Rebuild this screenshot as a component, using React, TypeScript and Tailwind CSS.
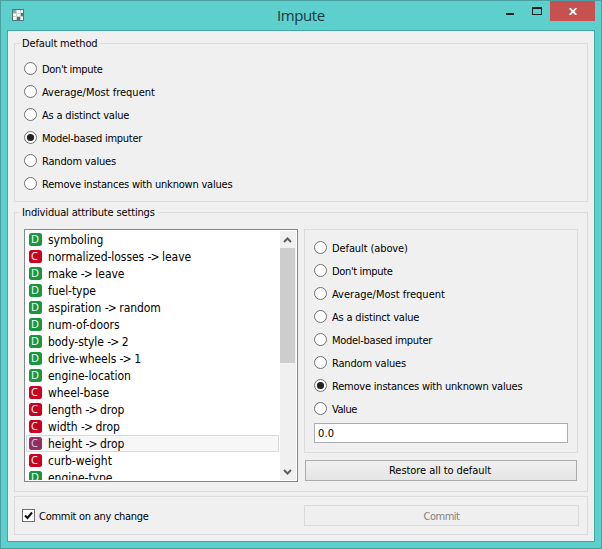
import React from "react";

const methods = [
  "Don't impute",
  "Average/Most frequent",
  "As a distinct value",
  "Model-based imputer",
  "Random values",
  "Remove instances with unknown values",
];

const tracking: Record<string, string> = {
  "Don't impute": "tracking-[-0.35px]",
  "Average/Most frequent": "tracking-[0px]",
  "As a distinct value": "tracking-[-0.19px]",
  "Model-based imputer": "tracking-[-0.28px]",
  "Random values": "tracking-[-0.18px]",
  "Remove instances with unknown values": "tracking-[-0.21px]",
  "Default (above)": "tracking-[-0.1px]",
  Value: "tracking-[-0.45px]",
};

const attributes: [string, string, string?][] = [
  ["D", "symboling"],
  ["C", "normalized-losses", "leave"],
  ["D", "make", "leave"],
  ["D", "fuel-type"],
  ["D", "aspiration", "random"],
  ["D", "num-of-doors"],
  ["D", "body-style", "2"],
  ["D", "drive-wheels", "1"],
  ["D", "engine-location"],
  ["C", "wheel-base"],
  ["C", "length", "drop"],
  ["C", "width", "drop"],
  ["C", "height", "drop"],
  ["C", "curb-weight"],
  ["D", "engine-type"],
];

function Radio({ label, checked }: { label: string; checked?: boolean }) {
  return (
    <div className="flex h-[23px] items-center gap-[5px]">
      <svg width="13" height="13" className="shrink-0">
        <circle cx="6.5" cy="6.5" r="6" fill="#fff" stroke="#707070" />
        {checked && <circle cx="6.5" cy="6.5" r="3.6" fill="#222" />}
      </svg>
      <span className={"relative top-px whitespace-nowrap " + tracking[label]}>{label}</span>
    </div>
  );
}

function AttributeRow({
  kind,
  name,
  action,
  selected,
}: {
  kind: string;
  name: string;
  action?: string;
  selected: boolean;
}) {
  const color = selected ? "bg-[#962d62]" : kind === "D" ? "bg-[#1b9640]" : "bg-[#ca0020]";
  return (
    <div
      className={
        "flex h-[17px] shrink-0 items-center gap-[6px] border pl-[2px] " +
        (selected ? "border-[#dadada] bg-[#f7f7f7]" : "border-transparent")
      }
    >
      <span
        className={
          "flex h-[13px] w-[13px] shrink-0 items-center rounded-[2.5px] pl-[2px] font-['Open_Sans',sans-serif] text-[11px] leading-[11px] tracking-normal [font-stretch:normal] " +
          (selected ? "text-[#c9d3ee] " : "text-white ") +
          color
        }
      >
        <span className="pb-[2px]">{kind}</span>
      </span>
      <span className="whitespace-nowrap pt-[2px]">
        {name}
        {action && (
          <>
            {" "}
            <span className="tracking-[-0.9px]">-&gt;</span> {action}
          </>
        )}
      </span>
    </div>
  );
}

function Legend({ text }: { text: string }) {
  return (
    <legend className="ml-[5px] h-[14px] whitespace-nowrap pl-[2px] pr-[3px] leading-[16px]">{text}</legend>
  );
}

export default function App() {
  return (
    <div className="flex h-[549px] w-[602px] flex-col overflow-hidden border border-[#4a9fa0] bg-[#5dd0ce] font-['DejaVu_Sans_Condensed','DejaVu_Sans',sans-serif] text-[11px] leading-[14px] tracking-[-0.15px] text-black [font-stretch:condensed]">
      <header className="flex h-[29px] shrink-0 items-start pl-[11px] pr-[6px]">
        <svg width="12" height="12" className="mt-[8px]" shapeRendering="crispEdges">
          <rect width="12" height="12" fill="#4f7776" />
          <rect x="1" y="1" width="10" height="10" fill="#c3d2ce" />
          <rect x="1" y="1" width="3" height="3" fill="#8fa9a4" />
          <rect x="5" y="1" width="3" height="3" fill="#fff" />
          <rect x="9" y="1" width="2" height="3" fill="#fff" />
          <rect x="1" y="5" width="3" height="2" fill="#fff" />
          <rect x="5" y="5" width="3" height="2" fill="#fff" />
          <rect x="9" y="4" width="2" height="3" fill="#58716d" />
          <rect x="1" y="8" width="3" height="3" fill="#fff" />
          <rect x="5" y="8" width="3" height="3" fill="#58716d" />
          <rect x="9" y="8" width="2" height="3" fill="#fff" />
        </svg>
        <h1 className="ml-[253px] mt-[4px] w-[60px] font-['Open_Sans',sans-serif] text-[15px] leading-[20px] tracking-[-0.4px] text-[#20393b] [font-stretch:normal]">
          Impute
        </h1>
        <svg width="36" height="20" className="ml-auto" shapeRendering="crispEdges">
          <path d="M0 12h8v2h-8z" fill="#222" />
          <path fillRule="evenodd" d="M26 6h10v8h-10zM27 8v5h8v-5z" fill="#222" />
        </svg>
        <div className="ml-[8px] flex h-[20px] w-[45px] items-center justify-center bg-[#c75050]">
          <svg width="8" height="7" viewBox="0 0 8 7" className="mt-px">
            <path d="M0.7 0.2L7.3 6.8M7.3 0.2L0.7 6.8" stroke="#fff" strokeWidth="1.9" />
          </svg>
        </div>
      </header>

      <main className="mx-[6px] mb-[6px] flex h-[512px] shrink-0 flex-col border border-[#46a5a5] bg-[#f0f0f0] px-[6px] pt-[5px]">
        <fieldset className="h-[166px] border border-[#dcdcdc]">
          <Legend text="Default method" />
          <div className="pl-[9px] pt-[7px]">
            {methods.map((m) => (
              <Radio key={m} label={m} checked={m === "Model-based imputer"} />
            ))}
          </div>
        </fieldset>

        <fieldset className="mt-[3px] h-[287px] border border-[#dcdcdc]">
          <Legend text="Individual attribute settings" />
          <div className="flex gap-[6px] pl-[9px] pt-[10px]">
            <div className="flex h-[253px] w-[274px] border border-[#828790] bg-white p-px">
              <div className="flex w-[253px] flex-col overflow-hidden text-[12px] leading-[15px] tracking-[-0.05px]">
                {attributes.map(([kind, name, action]) => (
                  <AttributeRow key={name} kind={kind} name={name} action={action} selected={name === "height"} />
                ))}
              </div>
              <div className="ml-auto flex w-[16px] flex-col items-start bg-[#f0f0f0]">
                <svg width="15" height="17">
                  <path d="M4 11L7.5 7.5L11 11" fill="none" stroke="#606060" strokeWidth="2" />
                </svg>
                <div className="h-[115px] w-[15px] bg-[#cdcdcd]" />
                <svg width="15" height="17" className="mt-auto">
                  <path d="M4 7L7.5 10.5L11 7" fill="none" stroke="#606060" strokeWidth="2" />
                </svg>
              </div>
            </div>

            <div className="flex w-[274px] flex-col">
              <div className="h-[224px] border border-[#dcdcdc] pl-[9px] pt-[6px]">
                <Radio label="Default (above)" />
                {methods.map((m) => (
                  <Radio key={m} label={m} checked={m.startsWith("Remove")} />
                ))}
                <Radio label="Value" />
                <div className="mt-[3px] flex h-[20px] w-[254px] items-center border border-[#abadb3] bg-white pl-[3px] pt-[2px] tracking-[0.1px]">
                  0.0
                </div>
              </div>
              <button className="ml-px mt-[7px] h-[21px] w-[272px] border border-[#acacac] bg-linear-to-b from-[#f0f0f0] to-[#e5e5e5] pr-[2px] pt-px tracking-[-0.06px]">
                Restore all to default
              </button>
            </div>
          </div>
        </fieldset>

        <section className="mt-[4px] flex h-[39px] shrink-0 items-center border border-[#dcdcdc] pl-[7px]">
          <svg width="13" height="13">
            <rect x="0.5" y="0.5" width="12" height="12" fill="#fff" stroke="#707070" />
            <path d="M3 6.5L5.5 9L10 3.5" fill="none" stroke="#111" strokeWidth="2" />
          </svg>
          <span className="ml-[4px] w-[265px] pt-[2px] tracking-[-0.28px]">Commit on any change</span>
          <button className="h-[21px] w-[275px] border border-[#d9d9d9] bg-[#efefef] pt-[2px] tracking-[-0.5px] text-[#838383]">
            Commit
          </button>
        </section>
      </main>
    </div>
  );
}
